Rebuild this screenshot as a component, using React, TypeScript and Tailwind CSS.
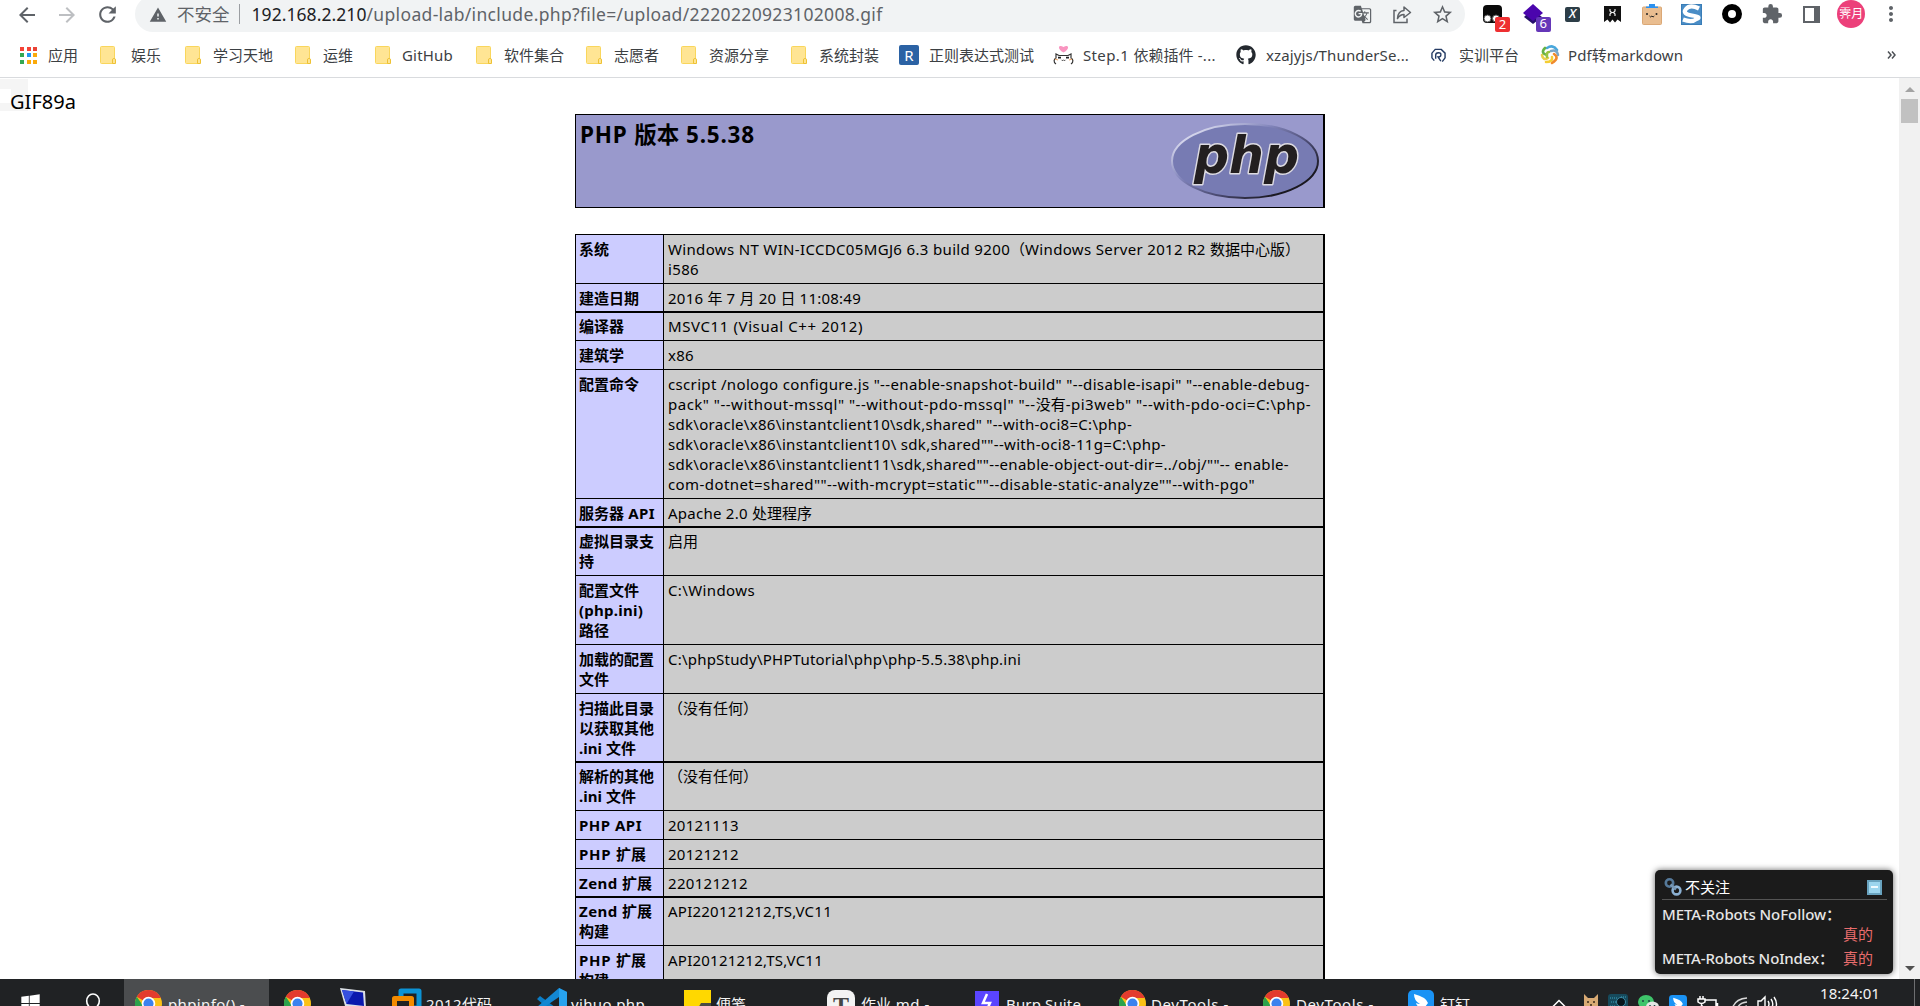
import { Fragment, useLayoutEffect, useRef, useState, type ReactNode } from "react";
import {
  MdArrowBack,
  MdArrowForward,
  MdExtension,
  MdGTranslate,
  MdMoreVert,
  MdRefresh,
  MdStarBorder,
  MdWarning,
} from "react-icons/md";
import { FaGithub, FaWindows } from "react-icons/fa";

const CJK = /([\u2e80-\u9fff\uff00-\uffef]+)/;

/** One line of mixed Latin and Chinese text; `w` is the line's total width in pixels. */
function Line({ children, w }: { children: string; w?: number }) {
  const ref = useRef<HTMLSpanElement>(null);
  const [spacing, setSpacing] = useState(0);
  const parts = children.split(CJK).filter(Boolean);
  useLayoutEffect(() => {
    if (!ref.current || !w) return;
    const latin = parts.filter((p) => !CJK.test(p)).join("").length;
    const natural = ref.current.getBoundingClientRect().width;
    if (latin) setSpacing((w - natural) / latin);
  }, []);
  return (
    <span ref={ref} className="inline-block whitespace-pre">
      {parts.map((p, i) =>
        CJK.test(p) ? (
          <Fragment key={i}>{p}</Fragment>
        ) : (
          <span key={i} className="text-[1em]" style={{ letterSpacing: spacing }}>
            {p}
          </span>
        ),
      )}
    </span>
  );
}

function Folder() {
  return (
    <svg width="16" height="18" viewBox="0 0 16 18">
      <rect x="0.5" y="0.5" width="14" height="17" rx="1" fill="#ffe594" stroke="#f9d65c" />
      <path d="M12.5 17.5v-4.3q1.5-1.6 3 0v4.3z" fill="#ffe594" stroke="#eec235" />
    </svg>
  );
}

function AppsIcon() {
  const c = ["#f44336", "#f44336", "#ea4335", "#34a853", "#2196f3", "#fbaa0a", "#34a853", "#fbaa0a", "#fbaa0a"];
  return (
    <div className="grid w-max grid-cols-3 gap-[2.5px]">
      {c.map((color, i) => (
        <div key={i} className="size-[4px]" style={{ backgroundColor: color }} />
      ))}
    </div>
  );
}

function RegexIcon() {
  return (
    <div className="flex size-5 items-center justify-center rounded-[2px] bg-[#2b62a4] text-[15px] text-white">
      R
    </div>
  );
}

function CatIcon() {
  return (
    <svg width="21" height="20" viewBox="0 0 21 20">
      <path d="M10.5 7.5C3 3 6-1 10.5 2 15-1 18 3 10.5 7.5z" fill="#f995c0" />
      <path d="M3 19c-3-2-2-5 0-6V9l3 1.5h9L18 9v4c2 1 3 4 0 6" fill="#fff" stroke="#333" strokeWidth="1.2" />
      <path d="M5 12.6h3M13 12.6h3" stroke="#222" strokeWidth="1.8" />
      <path d="M8.5 14.8l1 1 1-1 1 1 1-1" fill="none" stroke="#444" />
      <path d="M2 14l3 1M19 14l-3 1" stroke="#f0a96c" strokeWidth="1.2" />
    </svg>
  );
}

function TrainingIcon() {
  return (
    <svg width="15" height="15" viewBox="0 0 16 16" fill="none" stroke="#243b63" strokeWidth="1.5">
      <path d="M3.5 13.5L1 10.5V5.5L4.5 1.5H11L15 5.5V10.5L12 14.5" />
      <path d="M5 11.5V7.5Q5 5 8 5T10.5 7.5Q10.5 9.5 7.5 9.5L10.5 14" />
    </svg>
  );
}

function SwirlIcon() {
  return (
    <svg width="20" height="20" viewBox="0 0 20 20" fill="none" strokeWidth="2.6" strokeLinecap="round">
      <path d="M7 3Q13-1 17 5" stroke="#49a7dc" />
      <path d="M11 6Q17 4 18 10" stroke="#7ba7c7" />
      <path d="M14 9Q20 13 12 18" stroke="#f08a2c" />
      <path d="M12 12Q13 17 6 17" stroke="#f4ce33" />
      <path d="M8 13Q3 16 2 10" stroke="#e9cf4b" />
      <path d="M7 10Q0 8 5 3" stroke="#66b245" />
      <path d="M9 7Q6 7 7 12" stroke="#9ac33e" />
    </svg>
  );
}

type Bookmark = { label: string; text?: number; icon: ReactNode; lead: string; slot: string };
const bookmarks: Bookmark[] = [
  { label: "应用", icon: <AppsIcon />, lead: "w-[28px]", slot: "w-[80px]" },
  { label: "娱乐", icon: <Folder />, lead: "w-[31px]", slot: "w-[85px]" },
  { label: "学习天地", icon: <Folder />, lead: "w-[28px]", slot: "w-[110px]" },
  { label: "运维", icon: <Folder />, lead: "w-[28px]", slot: "w-[80px]" },
  { label: "GitHub", text: 51, icon: <Folder />, lead: "w-[27px]", slot: "w-[101px]" },
  { label: "软件集合", icon: <Folder />, lead: "w-[28px]", slot: "w-[110px]" },
  { label: "志愿者", icon: <Folder />, lead: "w-[28px]", slot: "w-[95px]" },
  { label: "资源分享", icon: <Folder />, lead: "w-[28px]", slot: "w-[110px]" },
  { label: "系统封装", icon: <Folder />, lead: "w-[28px]", slot: "w-[108px]" },
  { label: "正则表达式测试", icon: <RegexIcon />, lead: "w-[30px]", slot: "w-[154px]" },
  { label: "Step.1 依赖插件 -...", text: 133, icon: <CatIcon />, lead: "w-[30px]", slot: "w-[183px]" },
  { label: "xzajyjs/ThunderSe...", text: 143, icon: <FaGithub size={20} color="#24292f" />, lead: "w-[30px]", slot: "w-[195px]" },
  { label: "实训平台", icon: <TrainingIcon />, lead: "w-[28px]", slot: "w-[109px]" },
  { label: "Pdf转markdown", text: 115, icon: <SwirlIcon />, lead: "w-[28px]", slot: "w-[160px]" },
];

function Toolbar() {
  return (
    <div className="flex h-8 items-start overflow-hidden">
      <div className="flex h-[29px] w-[135px] shrink-0 items-center text-[#5f6368]">
        <MdArrowBack size={24} className="ml-[15px]" />
        <MdArrowForward size={24} className="ml-4 text-[#bdbfc2]" />
        <MdRefresh size={25} className="ml-4" />
      </div>
      <div className="-mt-1 flex h-9 w-[1330px] shrink-0 items-center rounded-full bg-[#f1f3f4] text-[17.5px] text-[#5f6368]">
        <MdWarning size={18} className="mt-0.5 ml-[14px]" />
        <span className="ml-[10px]">不安全</span>
        <div className="ml-[9px] h-5 w-px bg-[#9b9ea2]" />
        <div className="ml-3 flex w-[632px]">
          <span className="text-[#202124]">
            <Line w={115}>192.168.2.210</Line>
          </span>
          <Line w={516}>/upload-lab/include.php?file=/upload/2220220923102008.gif</Line>
        </div>
        <MdGTranslate size={19} className="ml-[469px]" />
        <svg width="20" height="20" viewBox="0 0 20 20" className="ml-5" fill="none" stroke="#5f6368" strokeWidth="1.5">
          <path d="M4.5 6.500H2V18.500H15V14.500" />
          <path d="M5.500 14.500Q6 7 12 6.500V3L18.500 8.500L12 13.500V10.500Q8 10.500 5.500 14.500z" strokeLinejoin="round" />
        </svg>
        <MdStarBorder size={23} className="ml-[19px]" />
      </div>
      <div className="ml-2 grid h-7 w-[438px] shrink-0 grid-cols-11 place-items-center text-[#5f6368]">
        <div className="relative">
          <svg width="20" height="20" viewBox="0 0 20 20">
            <rect x="0" y="1" width="19" height="18" rx="4" fill="#0a0a0a" />
            <circle cx="4.500" cy="14.500" r="3.500" fill="#fff" stroke="#555" />
            <circle cx="13" cy="14.500" r="3.500" fill="#fff" stroke="#555" />
          </svg>
          <span className="absolute top-[13px] left-3 flex h-[15px] w-[15px] items-center justify-center rounded-[2px] bg-[#ee2f31] text-[13px] text-white">
            2
          </span>
        </div>
        <div className="relative">
          <svg width="20" height="21" viewBox="0 0 20 21">
            <path d="M1 13L9 5L19 13L10 20z" fill="#25106b" />
            <path d="M0 9L10 0L20 9L10 17z" fill="#4b05ad" />
          </svg>
          <span className="absolute top-[13px] left-[13px] flex h-[15px] w-[15px] items-center justify-center rounded-[2px] bg-[#6537b8] text-[13px] text-white">
            6
          </span>
        </div>
        <div className="flex size-[15px] items-center justify-center rounded-[2px] bg-[#2c3d47] text-[13px] font-medium text-white italic">
          X
        </div>
        <svg width="17" height="17" viewBox="0 0 17 17">
          <path d="M0 0H17V16L13.500 13.500L11 16.500L8.500 13.500L6 16.500L3.500 13.500L0 16z" fill="#111" />
          <path d="M6 3v2l1.500 1.500L6 8V10M11 3v2L9.500 6.500L11 8V10M7 6.500h3" fill="none" stroke="#eee" strokeWidth="1.200" />
        </svg>
        <svg width="20" height="21" viewBox="0 0 20 21">
          <rect x="0.500" y="3" width="19" height="17.500" rx="1" fill="#e9bd90" stroke="#dba876" />
          <path d="M4 4V2.500H7V0H13V2.500H16V4z" fill="#2b91f0" />
          <circle cx="5" cy="10" r="1" fill="#222" />
          <circle cx="14.500" cy="10" r="1" fill="#222" />
          <path d="M7.500 12l1.200 1 1.200-1 1.200 1 1.200-1" fill="none" stroke="#222" />
        </svg>
        <svg width="21" height="21" viewBox="0 0 21 21">
          <rect x="0.500" y="0.500" width="20" height="20" fill="#4a8dc6" stroke="#397db7" />
          <path d="M18 4.500Q9 0 5 5T11 11.500T15.500 15Q11 19 2 15.500" fill="none" stroke="#fff" strokeWidth="4.200" />
        </svg>
        <div className="size-5 rounded-full border-6 border-black bg-white" />
        <MdExtension size={22} />
        <div className="size-[17px] border-2 border-r-6 border-[#5f6368]" />
        <div className="flex size-7 items-center justify-center rounded-full bg-[#ec407a] text-[12px] text-white">
          霁月
        </div>
        <MdMoreVert size={24} />
      </div>
    </div>
  );
}

function Bookmarks() {
  return (
    <div className="flex h-[46px] items-center border-b border-[#d9dbde] pt-px pl-5 text-[15px] text-[#3c4043]">
      {bookmarks.map((b) => (
        <div key={b.label} className={`flex shrink-0 items-center ${b.slot}`}>
          <div className={`shrink-0 ${b.lead}`}>{b.icon}</div>
          <Line w={b.text}>{b.label}</Line>
        </div>
      ))}
      <svg width="9" height="8" viewBox="0 0 9 8" className="ml-[187px]" fill="none" stroke="#4d5156" strokeWidth="1.500">
        <path d="M1 0.500L4 4L1 7.500M5 0.500L8 4L5 7.500" />
      </svg>
    </div>
  );
}

function PhpLogo() {
  return (
    <svg width="150" height="78" viewBox="0 0 150 78">
      <defs>
        <linearGradient id="rim" x1="0.150" y1="0.100" x2="0.900" y2="0.750">
          <stop offset="0" stopColor="#d9daee" />
          <stop offset="0.350" stopColor="#8285bb" />
          <stop offset="0.700" stopColor="#48486e" />
          <stop offset="1" stopColor="#1a1820" />
        </linearGradient>
      </defs>
      <ellipse cx="75" cy="39" rx="73" ry="37" fill="#777bb3" stroke="url(#rim)" strokeWidth="2" />
      <text
        x="24"
        y="51"
        textLength="105"
        lengthAdjust="spacingAndGlyphs"
        fontFamily="DejaVu Sans, sans-serif"
        fontWeight="700"
        fontStyle="italic"
        fontSize="52"
        fill="#231f20"
        stroke="#dddbe2"
        strokeWidth="3"
        strokeLinejoin="round"
        paintOrder="stroke"
      >
        php
      </text>
    </svg>
  );
}

type Txt = [string, number?];
type Row = { h: string; thick?: boolean; label: Txt[]; value: Txt[] };
const rows: Row[] = [
  {
    h: "h-[49px]",
    label: [["系统"]],
    value: [["Windows NT WIN-ICCDC05MGJ6 6.3 build 9200（Windows Server 2012 R2 数据中心版）", 632], ["i586", 31]],
  },
  { h: "h-[28px]", label: [["建造日期"]], value: [["2016 年 7 月 20 日 11:08:49", 193]] },
  { h: "h-[29px]", thick: true, label: [["编译器"]], value: [["MSVC11 (Visual C++ 2012)", 195]] },
  { h: "h-[29px]", label: [["建筑学"]], value: [["x86", 26]] },
  {
    h: "h-[129px]",
    label: [["配置命令"]],
    value: [
      ['cscript /nologo configure.js "--enable-snapshot-build" "--disable-isapi" "--enable-debug-', 642],
      ['pack" "--without-mssql" "--without-pdo-mssql" "--没有-pi3web" "--with-pdo-oci=C:\\php-', 643],
      ['sdk\\oracle\\x86\\instantclient10\\sdk,shared" "--with-oci8=C:\\php-', 464],
      ['sdk\\oracle\\x86\\instantclient10\\ sdk,shared""--with-oci8-11g=C:\\php-', 498],
      ['sdk\\oracle\\x86\\instantclient11\\sdk,shared""--enable-object-out-dir=../obj/""-- enable-', 621],
      ['com-dotnet=shared""--with-mcrypt=static""--disable-static-analyze""--with-pgo"', 587],
    ],
  },
  { h: "h-[28px]", label: [["服务器 API", 76]], value: [["Apache 2.0 处理程序", 144]] },
  { h: "h-[49px]", thick: true, label: [["虚拟目录支"], ["持"]], value: [["启用"]] },
  { h: "h-[69px]", label: [["配置文件"], ["(php.ini)", 64], ["路径"]], value: [["C:\\Windows", 87]] },
  { h: "h-[49px]", label: [["加载的配置"], ["文件"]], value: [["C:\\phpStudy\\PHPTutorial\\php\\php-5.5.38\\php.ini", 353]] },
  { h: "h-[68px]", label: [["扫描此目录"], ["以获取其他"], [".ini 文件", 57]], value: [["（没有任何）"]] },
  { h: "h-[49px]", thick: true, label: [["解析的其他"], [".ini 文件", 57]], value: [["（没有任何）"]] },
  { h: "h-[29px]", label: [["PHP API", 63]], value: [["20121113", 71]] },
  { h: "h-[29px]", label: [["PHP 扩展", 67]], value: [["20121212", 71]] },
  { h: "h-[28px]", label: [["Zend 扩展", 73]], value: [["220121212", 80]] },
  { h: "h-[49px]", thick: true, label: [["Zend 扩展", 73], ["构建"]], value: [["API220121212,TS,VC11", 164]] },
  { h: "h-[60px]", label: [["PHP 扩展", 67], ["构建"]], value: [["API20121212,TS,VC11", 155]] },
];

function Lines({ items }: { items: Txt[] }) {
  return (
    <>
      {items.map(([text, w], i) => (
        <div key={i} className="h-5">
          <Line w={w}>{text}</Line>
        </div>
      ))}
    </>
  );
}

function PhpInfo() {
  return (
    <div className="ml-[575px] w-[750px] text-black">
      <div className="mt-9 flex h-[94px] justify-between border border-r-2 border-black bg-[#9999cc] pr-[3px] pl-1">
        <h1 className="mt-1 text-[22.5px] leading-[32px] font-bold">
          <Line w={175}>PHP 版本 5.5.38</Line>
        </h1>
        <div className="mt-[7px]">
          <PhpLogo />
        </div>
      </div>
      <div className="mt-[26px] border-r-2 border-l border-black bg-[#cccccc] text-[15px] leading-5">
        {rows.map((r, i) => (
          <div
            key={i}
            className={`flex border-black ${r.h} ${r.thick ? "border-t-2" : "border-t"}`}
          >
            <div className={`w-[88px] shrink-0 border-r border-black bg-[#ccccff] pl-[3px] font-bold ${r.thick ? "pt-[3px]" : "pt-1"}`}>
              <Lines items={r.label} />
            </div>
            <div className={`pl-1 ${r.thick ? "pt-[3px]" : "pt-1"}`}>
              <Lines items={r.value} />
            </div>
          </div>
        ))}
      </div>
    </div>
  );
}

function Scrollbar() {
  return (
    <div className="flex w-[21px] shrink-0 flex-col items-center justify-between bg-[#f1f1f1]">
      <div className="flex flex-col items-center">
        <svg width="10" height="5" viewBox="0 0 10 5" className="mt-[9px]">
          <path d="M0 5L5 0L10 5z" fill="#a3a3a3" />
        </svg>
        <div className="mt-[7px] h-6 w-[17px] bg-[#c1c1c1]" />
      </div>
      <svg width="10" height="5" viewBox="0 0 10 5" className="mb-2">
        <path d="M0 0L5 5L10 0z" fill="#505050" />
      </svg>
    </div>
  );
}

function NoFollowPanel() {
  return (
    <div className="absolute top-[792px] left-[1655px] h-[104px] w-[238px] rounded-[5px] bg-[#1b1b1b] pr-1.5 pl-[7px] text-[15px] leading-5 text-[#e6e6e6] shadow-[0_0_6px_rgba(0,0,0,0.6)]">
      <div className="flex h-[30px] items-center border-b border-[#555] pt-[5px]">
        <svg width="18" height="18" viewBox="0 0 18 18" className="ml-0.5" fill="none" strokeWidth="2.600">
          <circle cx="5.500" cy="5" r="3.700" stroke="#55799a" />
          <circle cx="12.500" cy="12.500" r="3.900" stroke="#8bb0d2" />
          <path d="M6.500 6.500L12 11.500" stroke="#7697b5" />
        </svg>
        <span className="ml-[3px] text-white">不关注</span>
        <div className="mr-[5px] ml-auto flex size-[15px] items-center justify-center border-2 border-[#69a3bf] bg-[#9cd5ee]">
          <div className="h-[2px] w-[7px] bg-[#eefaff]" />
        </div>
      </div>
      <div className="mt-1 font-medium">
        <Line w={179}>META-Robots NoFollow：</Line>
      </div>
      <div className="pr-[14px] text-right text-[#e86c6c]">真的</div>
      <div className="mt-1 flex font-medium">
        <div className="w-[181px]">
          <Line w={172}>META-Robots NoIndex：</Line>
        </div>
        <span className="font-normal text-[#e86c6c]">真的</span>
      </div>
    </div>
  );
}

function Chrome() {
  return (
    <svg width="27" height="27" viewBox="0 0 48 48">
      <circle cx="24" cy="24" r="24" fill="#fbc116" />
      <path d="M24 24L3.200 12A24 24 0 0 1 44.800 12L46 14H24z" fill="#e33b2e" />
      <path d="M3.200 12A24 24 0 0 0 24 48L34 30L15 29z" fill="#2ba24c" />
      <circle cx="24" cy="24" r="12" fill="#fff" />
      <circle cx="24" cy="24" r="9" fill="#3b82ee" />
    </svg>
  );
}

function Ding({ size }: { size: number }) {
  return (
    <svg width={size} height={size} viewBox="0 0 26 26">
      <rect width="26" height="26" rx="5" fill="#1a93f5" />
      <path d="M6 4Q18 7 20 13L17 17H19L12 24L13.500 18Q9 17 8 13Q10 14 12 14Q6 11 6 4z" fill="#fff" />
    </svg>
  );
}

type Task = { slot: string; lead: string; label?: string; text?: number; icon: ReactNode };
const tasks: Task[] = [
  { slot: "w-[56px]", lead: "w-[34px]", icon: <Chrome /> },
  {
    slot: "w-[52px]",
    lead: "w-[34px]",
    icon: (
      <svg width="27" height="28" viewBox="0 0 27 28" className="-mt-0.5">
        <path d="M0 0L25 3L26 20L5 18z" fill="#dbe0e6" />
        <path d="M2 2L23 4.500L24 18L6.500 16z" fill="#0a18ae" />
        <path d="M2 2L14 3.500L6.500 16z" fill="#3650e0" />
        <path d="M4 20h18v8H4z" fill="#9aa" />
      </svg>
    ),
  },
  {
    slot: "w-[145px]",
    lead: "w-[34px]",
    label: "2012代码",
    text: 66,
    icon: (
      <svg width="30" height="30" viewBox="0 0 30 30" fill="none" strokeWidth="5" className="-mt-0.5">
        <path d="M9 9V3H27V20H20" stroke="#0c93d5" strokeLinejoin="round" />
        <rect x="2.500" y="10.500" width="17" height="17" stroke="#f38b00" strokeLinejoin="round" />
      </svg>
    ),
  },
  {
    slot: "w-[147px]",
    lead: "w-[34px]",
    label: "yihuo.php",
    text: 74,
    icon: (
      <svg width="30" height="30" viewBox="0 0 30 30" className="-mt-0.5">
        <path d="M22 0L30 4V26L22 30L0 11L3 8L22 22z" fill="#0b7dc6" />
        <path d="M22 0L30 4V26L22 30z" fill="#27a2ee" />
        <path d="M0 19L22 0V9L3 22z" fill="#1387d2" />
      </svg>
    ),
  },
  {
    slot: "w-[143px]",
    lead: "w-[32px]",
    label: "便笺",
    icon: (
      <svg width="27" height="27" viewBox="0 0 27 27">
        <path d="M0 0H27V27H0z" fill="#ffd800" />
        <path d="M17 13H27V20H13z" fill="#4a4a43" />
      </svg>
    ),
  },
  {
    slot: "w-[148px]",
    lead: "w-[34px]",
    label: "作业.md -",
    text: 69,
    icon: (
      <div className="flex size-7 justify-center rounded-lg bg-[#f3f3f3] font-['Liberation_Serif'] text-[24px] leading-[30px] font-bold text-[#444]">
        T
      </div>
    ),
  },
  {
    slot: "w-[144px]",
    lead: "w-[31px]",
    label: "Burp Suite",
    text: 75,
    icon: (
      <svg width="24" height="24" viewBox="0 0 24 24" className="mt-px">
        <rect width="24" height="24" fill="#5a45ff" />
        <path d="M12 3L8 12H15L11 21" fill="none" stroke="#fff" strokeWidth="2.500" />
      </svg>
    ),
  },
  { slot: "w-[144px]", lead: "w-[32px]", label: "DevTools -", text: 78, icon: <Chrome /> },
  { slot: "w-[145px]", lead: "w-[33px]", label: "DevTools -", text: 78, icon: <Chrome /> },
  { slot: "w-[144px]", lead: "w-[32px]", label: "钉钉", icon: <Ding size={26} /> },
];

function Taskbar() {
  return (
    <div className="flex h-[27px] shrink-0 items-start overflow-hidden bg-[#202224] text-[15px] leading-5 text-[#f4f4f4]">
      <div className="flex w-[124px] shrink-0">
        <FaWindows size={21} className="mt-[14px] ml-5 shrink-0 text-white" />
        <svg width="20" height="22" viewBox="0 0 20 22" className="mt-[14px] ml-[42px] shrink-0" fill="none" stroke="#fff" strokeWidth="1.600">
          <ellipse cx="10" cy="8" rx="6.300" ry="7" />
          <path d="M7 14L3 20" />
        </svg>
      </div>
      <div className="mr-[15px] flex h-[27px] w-[145px] shrink-0 bg-[#4b4d4f] pl-[11px]">
        <div className="mt-[11px] w-[33px] shrink-0">
          <Chrome />
        </div>
        <div className="mt-[15px]">
          <Line w={77}>phpinfo() -</Line>
        </div>
      </div>
      {tasks.map((t, i) => (
        <div key={i} className={`flex shrink-0 ${t.slot}`}>
          <div className={`mt-[11px] shrink-0 ${t.lead}`}>{t.icon}</div>
          {t.label && (
            <div className="mt-[15px]">
              <Line w={t.text}>{t.label}</Line>
            </div>
          )}
        </div>
      ))}
      <div className="flex w-[268px] shrink-0 items-start">
        <svg width="14" height="8" viewBox="0 0 14 8" className="mt-5" fill="none" stroke="#fff" strokeWidth="1.500">
          <path d="M1 7.500L7 1.500L13 7.500" />
        </svg>
        <svg width="16" height="16" viewBox="0 0 16 16" className="mt-[15px] ml-[17px]">
          <path d="M1 16V0L5 4H11L15 0V16z" fill="#d9aa74" />
          <path d="M4 8h2M10 8h2M7 11h2" stroke="#3a2a1a" strokeWidth="1.500" />
        </svg>
        <svg width="20" height="18" viewBox="0 0 20 18" className="mt-[15px] ml-[9px]">
          <rect width="20" height="18" rx="3" fill="#164a5c" />
          <path d="M2 4h8M3 8h5M2 12h6M13 3h5" stroke="#3aa0bd" strokeDasharray="1 1" />
          <circle cx="13" cy="8" r="4.500" fill="#07161d" stroke="#3d8ba5" />
          <path d="M8 18Q13 8 18 18z" fill="#07161d" />
        </svg>
        <svg width="21" height="17" viewBox="0 0 21 17" className="mt-4 ml-2.5">
          <ellipse cx="8" cy="7" rx="8" ry="7" fill="#3ec46a" />
          <ellipse cx="14.500" cy="12" rx="6.500" ry="5.500" fill="#e2e5e3" />
          <path d="M5 5v2M11 5v2M12 10v2M16.500 10v2" stroke="#244" strokeWidth="1.500" />
        </svg>
        <div className="mt-4 ml-2.5">
          <Ding size={18} />
        </div>
        <svg width="22" height="18" viewBox="0 0 22 18" className="mt-[17px] ml-[10px]" fill="none" stroke="#fff" strokeWidth="1.500">
          <path d="M8 4H19V14H5V9M20.500 7v4M3 0v3M6 0v3M1 3H8V6Q4.500 9 1 6zM4.500 8V14" />
        </svg>
        <svg width="18" height="18" viewBox="0 0 18 18" className="mt-[18px] ml-3" fill="none" stroke="#d8d8d8" strokeWidth="1.500">
          <path d="M1 13Q3 2 16 1M6 13Q7 6 16 5M11 13Q12 10 16 9" />
        </svg>
        <svg width="22" height="18" viewBox="0 0 22 18" className="mt-4 ml-2" fill="none" stroke="#fff" strokeWidth="1.400">
          <path d="M1 6H4L8 2V15L4 12H1zM11 6Q13 9 11 12M14 4Q17.500 9 14 14M17 2Q22 9 17 16" />
        </svg>
      </div>
      <div className="mt-1 w-[94px] shrink-0">
        <Line w={60}>18:24:01</Line>
      </div>
      <div className="h-[27px] w-px bg-[#6d6e70]" />
    </div>
  );
}

export default function App() {
  return (
    <div className="flex h-[1006px] w-[1920px] flex-col overflow-hidden bg-white font-['Noto_Sans','Noto_Sans_CJK_SC',sans-serif]">
      <Toolbar />
      <Bookmarks />
      <div className="relative flex h-[901px] shrink-0 overflow-hidden">
        <div className="absolute top-px left-0 h-8 w-7 bg-[#f5f5f5]" />
        <div className="absolute top-[11px] left-0 h-[14px] w-[11px] bg-white" />
        <div className="absolute top-[10px] left-2.5 text-[20px] leading-7 text-black">
          <Line w={66}>GIF89a</Line>
        </div>
        <div className="flex-1">
          <PhpInfo />
        </div>
        <Scrollbar />
        <NoFollowPanel />
      </div>
      <Taskbar />
    </div>
  );
}
